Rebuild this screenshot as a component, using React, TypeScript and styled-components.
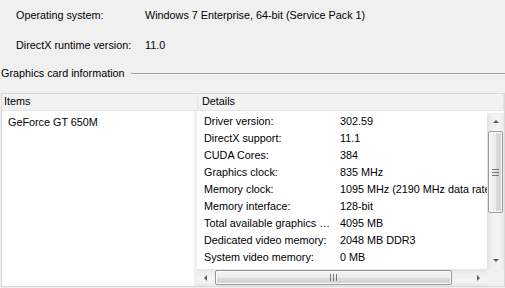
import styled, { createGlobalStyle } from 'styled-components';

const GlobalStyle = createGlobalStyle`
	html, body {
		margin: 0;
		padding: 0;
		background: #f0f0f0;
	}
	body {
		font-family: 'Liberation Sans', Arial, sans-serif;
		font-size: 10.8px;
		color: #000;
	}
`;

const Page = styled.div`
	width: 505px;
	height: 288px;
	overflow: hidden;
	display: flex;
	flex-direction: column;
`;

const InfoList = styled.div`
	display: flex;
	flex-direction: column;
`;

const InfoRow = styled.div`
	display: flex;
	line-height: 30px;
	white-space: nowrap;
`;

const InfoLabel = styled.span`
	width: 129px;
	padding-left: 16px;
`;

const GroupHeader = styled.div`
	display: flex;
	align-items: center;
	margin-top: 6px;
	padding-left: 1px;
	line-height: 14px;
	gap: 6px;
`;

const GroupLine = styled.div`
	flex: 1;
	height: 0;
	border-top: 1px solid #a0a0a0;
	border-bottom: 1px solid #ffffff;
	margin-top: 2px;
`;

const TableBox = styled.div`
	margin: 13px 0 0 1px;
	width: 504px;
	height: 194px;
	box-sizing: border-box;
	border: 1px solid #d5d9dd;
	background: #fff;
	display: flex;
	flex-direction: column;
`;

const HeaderRow = styled.div`
	display: flex;
	height: 17px;
	box-sizing: border-box;
	background: #f2f2f2;
	border-bottom: 1px solid #e2e4e6;
	line-height: 15px;
`;

const HeaderCell = styled.div<{ $width?: number; $pad: number }>`
	${(p) => (p.$width ? `width: ${p.$width}px;` : 'flex: 1;')}
	padding-left: ${(p) => p.$pad}px;
	box-sizing: border-box;
	border-right: 1px solid #e4e4e4;
`;

const Body = styled.div`
	flex: 1;
	display: flex;
	min-height: 0;
`;

const ItemsPanel = styled.div`
	width: 192px;
	padding: 3px 0 0 6px;
	box-sizing: border-box;
	line-height: 16px;
	background: #fff;
`;

const Divider = styled.div`
	width: 3px;
	background: #f0f0f0;
`;

const DetailsPanel = styled.div`
	flex: 1;
	display: flex;
	flex-direction: column;
	padding-top: 2px;
	min-width: 0;
`;

const DetailsTop = styled.div`
	flex: 1;
	display: flex;
	min-height: 0;
`;

const DetailsView = styled.div`
	flex: 1;
	overflow: hidden;
	min-width: 0;
`;

const DetailRow = styled.div`
	display: flex;
	height: 17px;
	line-height: 17px;
	padding-left: 7px;
	white-space: nowrap;
`;

const DetailLabel = styled.span`
	width: 136px;
	flex-shrink: 0;
	overflow: hidden;
	text-overflow: ellipsis;
	padding-right: 4px;
	box-sizing: border-box;
`;

const DetailValue = styled.span`
	flex-shrink: 0;
`;

const VScroll = styled.div`
	width: 17px;
	display: flex;
	flex-direction: column;
	background: linear-gradient(to right, #e3e3e3, #f0f0f0 30%, #f5f5f5 70%, #e8e8e8);
`;

const HScrollRow = styled.div`
	display: flex;
	height: 17px;
`;

const HScroll = styled.div`
	flex: 1;
	display: flex;
	background: linear-gradient(to bottom, #e3e3e3, #f0f0f0 30%, #f5f5f5 70%, #e8e8e8);
`;

const Corner = styled.div`
	width: 17px;
	background: #f0f0f0;
`;

const ArrowButton = styled.div`
	width: 17px;
	height: 17px;
	flex-shrink: 0;
	display: flex;
	align-items: center;
	justify-content: center;
`;

const Track = styled.div<{ $vertical?: boolean }>`
	flex: 1;
	display: flex;
	flex-direction: ${(p) => (p.$vertical ? 'column' : 'row')};
	padding: 1px;
`;

const Thumb = styled.div<{ $vertical?: boolean }>`
	box-sizing: border-box;
	border: 1px solid #979797;
	border-radius: 2px;
	display: flex;
	align-items: center;
	justify-content: center;
	background: ${(p) =>
		p.$vertical
			? 'linear-gradient(to right, #f4f4f4, #ececec 50%, #dcdcdc 51%, #d2d2d2)'
			: 'linear-gradient(to bottom, #f4f4f4, #ececec 50%, #dcdcdc 51%, #d2d2d2)'};
	box-shadow: inset 0 0 0 1px #fbfbfb;
`;

const Arrow = ({ dir }: { dir: 'up' | 'down' | 'left' | 'right' }) => {
	const pts = {
		up: '1,5 4,2 7,5',
		down: '1,2 4,5 7,2',
		left: '5,1 2,4 5,7',
		right: '2,1 5,4 2,7',
	}[dir];
	return (
		<svg width="8" height="8" viewBox="0 0 8 8">
			<polygon points={pts} fill="#606060" />
		</svg>
	);
};

const Grip = ({ vertical }: { vertical?: boolean }) =>
	vertical ? (
		<svg width="7" height="7" viewBox="0 0 7 7">
			<rect x="0" y="0" width="7" height="1" fill="#777" />
			<rect x="0" y="3" width="7" height="1" fill="#777" />
			<rect x="0" y="6" width="7" height="1" fill="#777" />
		</svg>
	) : (
		<svg width="7" height="7" viewBox="0 0 7 7">
			<rect x="0" y="0" width="1" height="7" fill="#777" />
			<rect x="3" y="0" width="1" height="7" fill="#777" />
			<rect x="6" y="0" width="1" height="7" fill="#777" />
		</svg>
	);

const details: [string, string][] = [
	['Driver version:', '302.59'],
	['DirectX support:', '11.1'],
	['CUDA Cores:', '384'],
	['Graphics clock:', '835 MHz'],
	['Memory clock:', '1095 MHz (2190 MHz data rate)'],
	['Memory interface:', '128-bit'],
	['Total available graphics memory:', '4095 MB'],
	['Dedicated video memory:', '2048 MB DDR3'],
	['System video memory:', '0 MB'],
];

const App = () => {
	return (
		<>
			<GlobalStyle />
			<Page>
				<InfoList>
					<InfoRow>
						<InfoLabel>Operating system:</InfoLabel>
						<span>Windows 7 Enterprise, 64-bit (Service Pack 1)</span>
					</InfoRow>
					<InfoRow>
						<InfoLabel>DirectX runtime version:</InfoLabel>
						<span>11.0</span>
					</InfoRow>
				</InfoList>
				<GroupHeader>
					<span>Graphics card information</span>
					<GroupLine />
				</GroupHeader>
				<TableBox>
					<HeaderRow>
						<HeaderCell $width={196} $pad={2}>
							Items
						</HeaderCell>
						<HeaderCell $pad={4}>Details</HeaderCell>
					</HeaderRow>
					<Body>
						<ItemsPanel>GeForce GT 650M</ItemsPanel>
						<Divider />
						<DetailsPanel>
							<DetailsTop>
								<DetailsView>
									{details.map(([label, value]) => (
										<DetailRow key={label}>
											<DetailLabel>{label}</DetailLabel>
											<DetailValue>{value}</DetailValue>
										</DetailRow>
									))}
								</DetailsView>
								<VScroll>
									<ArrowButton>
										<Arrow dir="up" />
									</ArrowButton>
									<Track $vertical>
										<Thumb $vertical style={{ height: 82 }}>
											<Grip vertical />
										</Thumb>
									</Track>
									<ArrowButton>
										<Arrow dir="down" />
									</ArrowButton>
								</VScroll>
							</DetailsTop>
							<HScrollRow>
								<HScroll>
									<ArrowButton>
										<Arrow dir="left" />
									</ArrowButton>
									<Track>
										<Thumb style={{ width: 237 }}>
											<Grip />
										</Thumb>
									</Track>
									<ArrowButton>
										<Arrow dir="right" />
									</ArrowButton>
								</HScroll>
								<Corner />
							</HScrollRow>
						</DetailsPanel>
					</Body>
				</TableBox>
			</Page>
		</>
	);
};

export default App;
